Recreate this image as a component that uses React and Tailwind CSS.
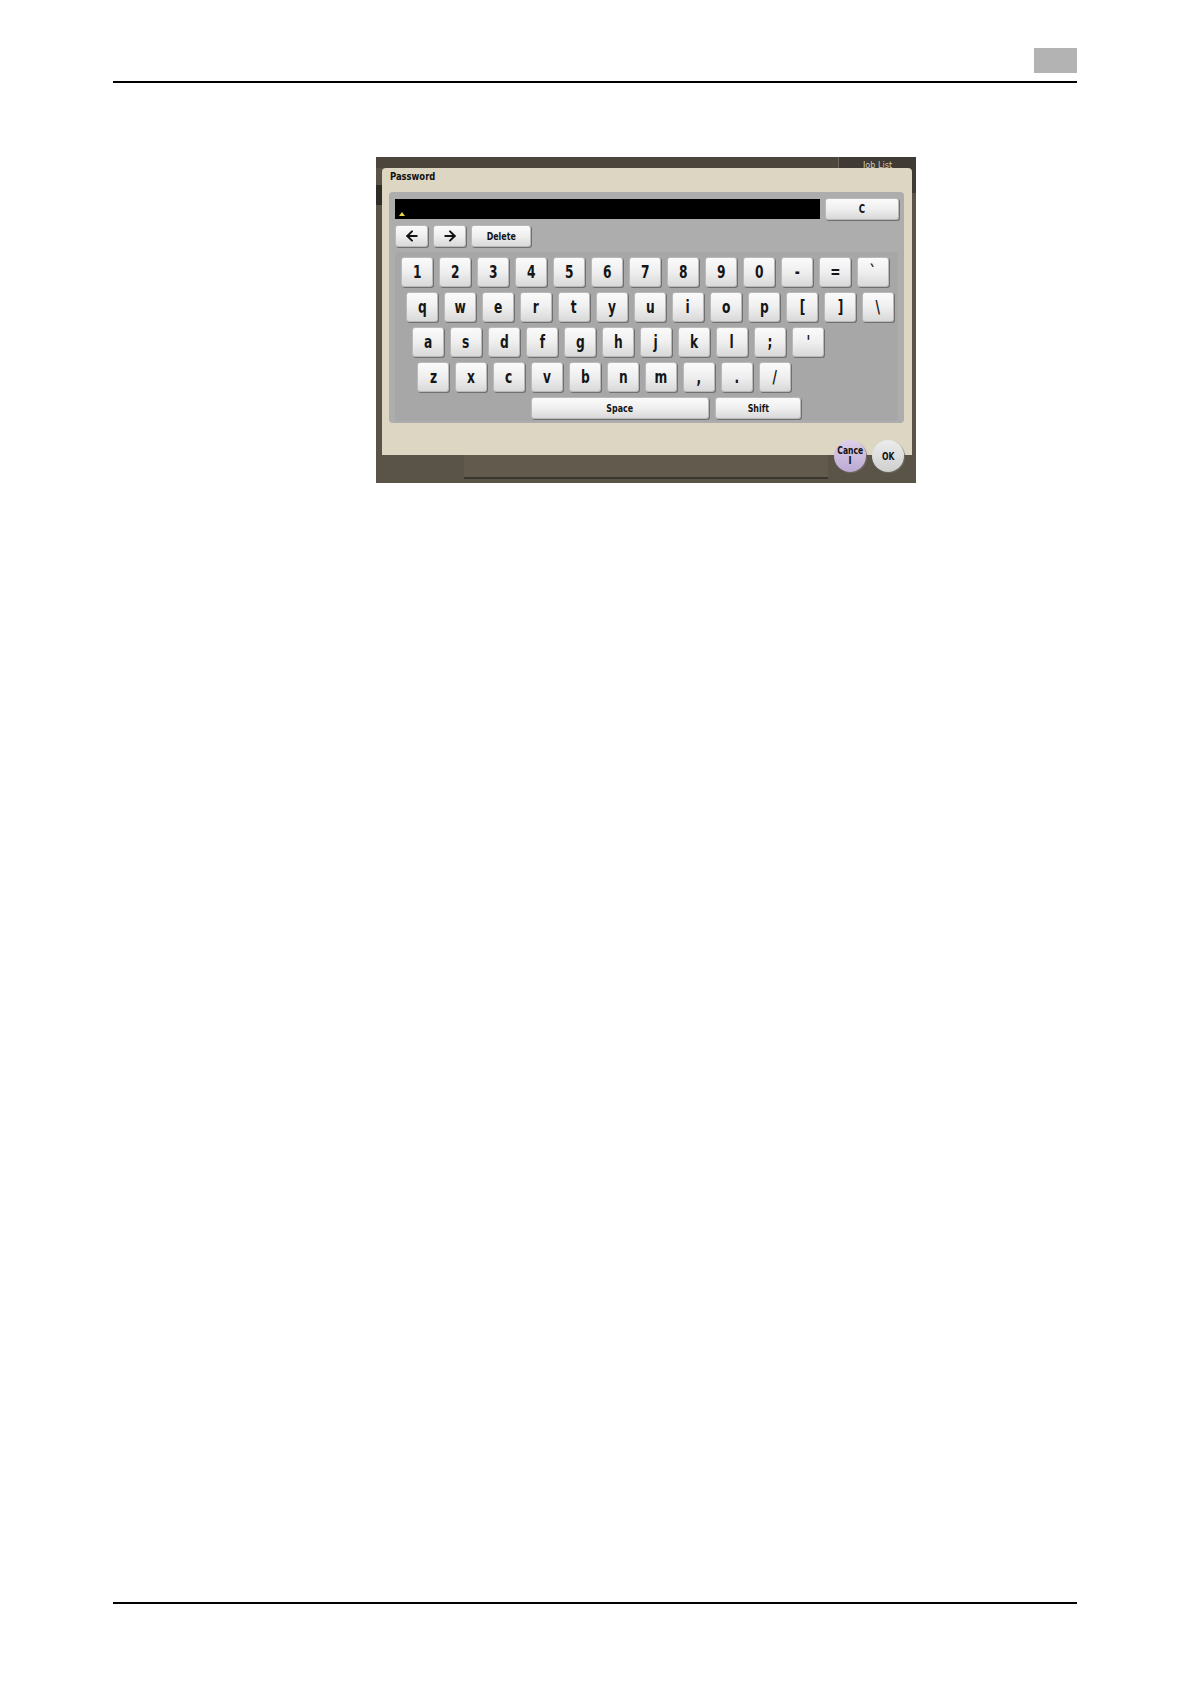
import React from 'react';
import { ArrowLeft, ArrowRight } from 'lucide-react';

const rows = [
  { pad: 'pl-[6px]', keys: ['1', '2', '3', '4', '5', '6', '7', '8', '9', '0', '-', '=', '`'] },
  { pad: 'pl-[11px]', keys: ['q', 'w', 'e', 'r', 't', 'y', 'u', 'i', 'o', 'p', '[', ']', '\\'] },
  { pad: 'pl-[17px]', keys: ['a', 's', 'd', 'f', 'g', 'h', 'j', 'k', 'l', ';', "'"] },
  { pad: 'pl-[22px]', keys: ['z', 'x', 'c', 'v', 'b', 'n', 'm', ',', '.', '/'] },
];

const keyBase =
  'flex items-center justify-center rounded-[3px] bg-gradient-to-b from-[#fbfbfb] via-[#efefef] to-[#d9d9d9] border border-[#b9b9b9] shadow-[1px_1px_0_#6f6f6f] text-[#151515] font-bold';

const Key = ({ label, className = '', textClass = 'text-[17px]' }) => (
  <div className={`${keyBase} ${textClass} ${className}`}>
    <span className="scale-x-[0.8] leading-none">{label}</span>
  </div>
);

export default function App() {
  return (
    <div
      className="w-[1190px] h-[1684px] bg-white flex flex-col"
      style={{ fontFamily: '"DejaVu Sans Condensed", "DejaVu Sans", "Liberation Sans", sans-serif' }}
    >
      {/* page header */}
      <div className="pt-[48px] px-[113px]">
        <div className="flex justify-end">
          <div className="w-[43px] h-[25px] bg-[#b3b3b3]" />
        </div>
        <div className="mt-[8px] h-[2px] bg-black" />
      </div>

      {/* panel screenshot */}
      <div className="mt-[74px] ml-[376px] w-[540px] h-[326px] bg-[#5a5347] relative flex flex-col overflow-hidden">
        {/* background: job list tab */}
        <div className="absolute right-0 top-0 w-[78px] h-[36px] bg-[#3f3a33] border-l border-[#6d655a] flex justify-center pt-[4px]">
          <span className="text-[9px] text-[#cfc9bd] leading-none">Job List</span>
        </div>
        <div className="absolute left-0 top-[28px] w-[6px] h-[20px] bg-[#2f2b26]" />

        <div className="h-[11px] bg-[#4b453c]" />

        <div className="pl-[6px]">
          <div className="w-[530px] h-[287px] bg-[#dcd6c3] rounded-t-[4px] relative">
            <div className="h-[24px] pl-[8px] pt-[3px] text-[11px] font-bold text-[#111] leading-none flex items-start">
              <span className="scale-x-[0.85] origin-left">Password</span>
            </div>

            <div className="ml-[7px] w-[515px] h-[231px] bg-[#adadad] rounded-[4px] pt-[7px] pl-[6px] flex flex-col">
              <div className="flex gap-[5px] items-start">
                <div className="w-[425px] h-[20px] bg-black relative">
                  <div className="absolute left-[4px] bottom-[3px] w-0 h-0 border-l-[3px] border-r-[3px] border-b-[4px] border-l-transparent border-r-transparent border-b-[#e8d84a]" />
                </div>
                <Key label="C" className="w-[74px] h-[22px] -mt-[1px]" textClass="text-[12px]" />
              </div>

              <div className="mt-[5px] flex gap-[5px]">
                <div className={`${keyBase} w-[33px] h-[22px]`}>
                  <ArrowLeft size={16} strokeWidth={3} />
                </div>
                <div className={`${keyBase} w-[33px] h-[22px]`}>
                  <ArrowRight size={16} strokeWidth={3} />
                </div>
                <Key label="Delete" className="w-[60px] h-[22px]" textClass="text-[11px]" />
              </div>

              <div className="mt-[5px] w-[503px] h-[169px] bg-[#a7a7a7] rounded-[4px] pt-[5px] flex flex-col">
                {rows.map((row, i) => (
                  <div key={i} className={`flex gap-[6px] ${row.pad} ${i === 0 ? '' : 'mt-[5px]'}`}>
                    {row.keys.map((k) => (
                      <Key key={k} label={k} className="w-[32px] h-[30px]" />
                    ))}
                  </div>
                ))}
                <div className="mt-[5px] flex gap-[6px] pl-[136px]">
                  <Key label="Space" className="w-[178px] h-[22px]" textClass="text-[11px]" />
                  <Key label="Shift" className="w-[86px] h-[22px]" textClass="text-[11px]" />
                </div>
              </div>
            </div>

            {/* Cancel / OK */}
            <div className="absolute left-[452px] top-[272px] flex gap-[6px]">
              <div className="w-[32px] h-[32px] rounded-full bg-gradient-to-b from-[#ddd0ea] to-[#bca9d2] shadow-[1px_1px_1px_#6f6a60] flex flex-col items-center justify-center text-[10px] font-bold text-[#111] leading-[10px]">
                <span className="scale-x-[0.85]">Cance</span>
                <span>l</span>
              </div>
              <div className="w-[32px] h-[32px] rounded-full bg-gradient-to-b from-[#ececec] to-[#cfcfcf] shadow-[1px_1px_1px_#6f6a60] flex items-center justify-center text-[10px] font-bold text-[#111]">
                <span className="scale-x-[0.85]">OK</span>
              </div>
            </div>
          </div>
        </div>

        <div className="flex-1 pl-[88px]">
          <div className="w-[364px] h-[24px] bg-[#615a4d] border-b-2 border-[#3a352e]" />
        </div>
      </div>

      {/* page footer */}
      <div className="mt-auto mb-[80px] mx-[113px] h-[2px] bg-black" />
    </div>
  );
}
